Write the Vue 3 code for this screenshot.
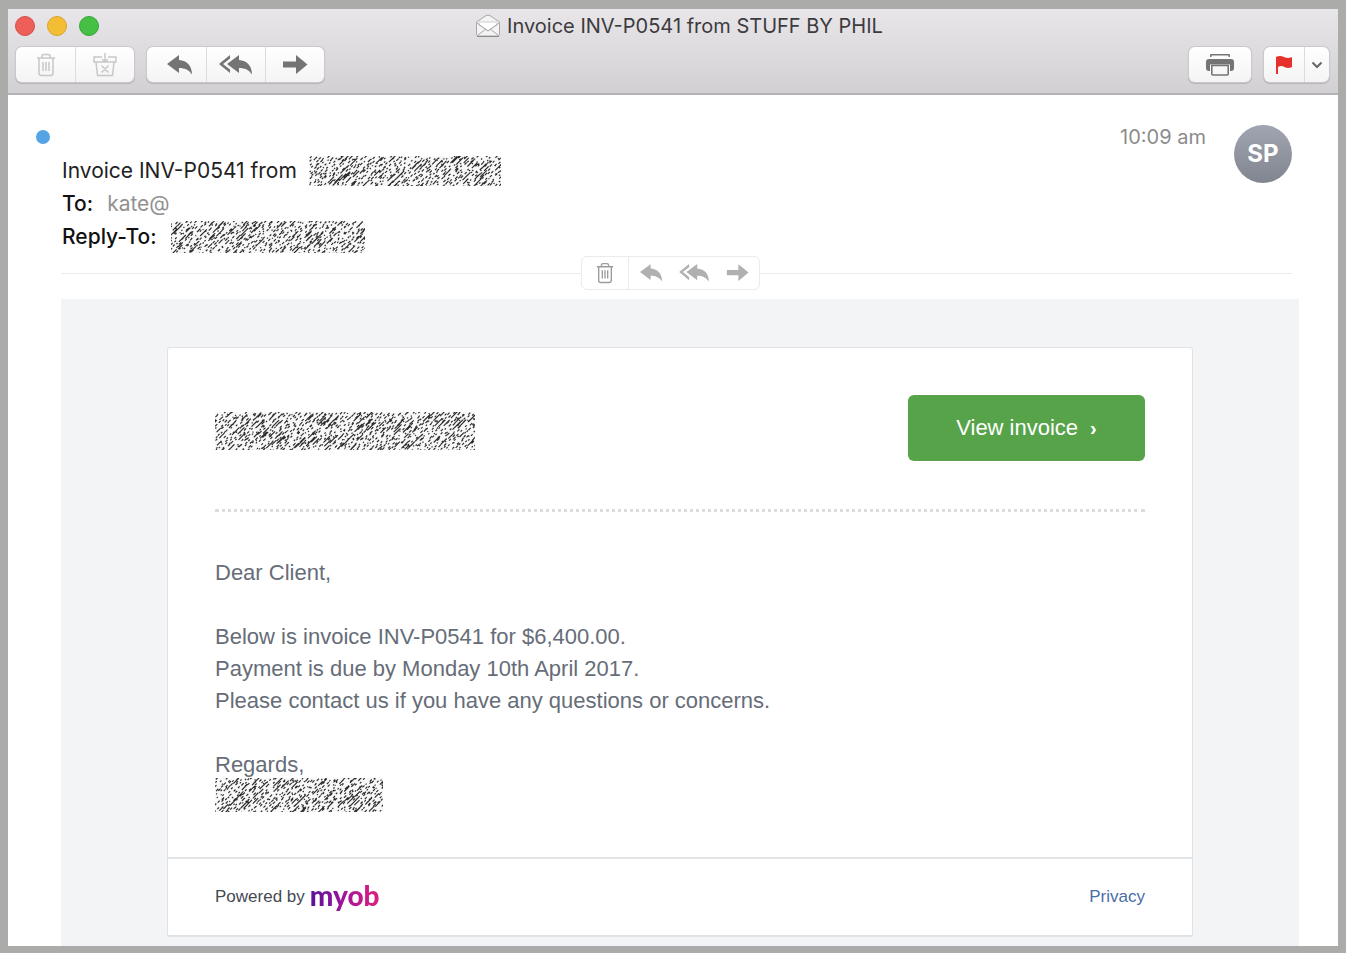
<template>
    <div class="window">
        <header class="toolbar">
            <div class="title-row">
                <div class="lights">
                    <button class="light red" aria-label="Close"></button>
                    <button class="light yellow" aria-label="Minimise"></button>
                    <button class="light green" aria-label="Zoom"></button>
                </div>
                <h1 class="window-title">
                    <svg width="26" height="24" viewBox="0 0 26 24" fill="none" stroke="#a9a9a9">
                        <path d="M1.5 8 L11 1.6 Q13 .6 15 1.6 L24.5 8 V20 Q24.5 22 22.500 22 H3.500 Q1.500 22 1.500 20Z" fill="#f4f4f4"/>
                        <path d="M4 8 H22 V11 L13 17 L4 11Z" fill="#fff" stroke="#d0d0d0"/>
                        <path d="M2 9 L13 17 L24 9 M3 21 L11 15 M23 21 L15 15"/>
                        <path d="M2 22.500 H24" stroke="#8c8c8c"/>
                    </svg>
                    <span>Invoice INV-P0541 from STUFF BY PHIL</span>
                </h1>
            </div>
            <div class="button-row">
                <div class="group">
                    <button class="tool" disabled aria-label="Delete">
                        <svg width="20" height="24" viewBox="0 0 20 24" class="line"><path :d="icons.trash"/></svg>
                    </button>
                    <button class="tool" disabled aria-label="Junk">
                        <svg width="24" height="24" viewBox="0 0 24 24" class="line"><path :d="icons.junk"/></svg>
                    </button>
                </div>
                <div class="group">
                    <button class="tool reply" aria-label="Reply">
                        <svg width="26" height="20" viewBox="0 0 26 20"><path :d="icons.reply"/></svg>
                    </button>
                    <button class="tool" aria-label="Reply all">
                        <svg width="34" height="20" viewBox="0 0 34 20">
                            <path :d="icons.reply" transform="translate(8 0)"/>
                            <path :d="icons.chevron"/>
                        </svg>
                    </button>
                    <button class="tool" aria-label="Forward">
                        <svg width="26" height="20" viewBox="0 0 26 20"><path :d="icons.forward"/></svg>
                    </button>
                </div>
                <div class="group push">
                    <button class="tool print" aria-label="Print">
                        <svg width="30" height="24" viewBox="0 0 30 24">
                            <path d="M5 4 V2 Q5 1 6 1 H24 Q25 1 25 2 V4 H23.500 V2.500 H6.500 V4Z"/>
                            <path d="M4 6 H26 Q29 6 29 9 V15 Q29 18 26 18 H25 V11.500 H5 V18 H4 Q1 18 1 15 V9 Q1 6 4 6Z"/>
                            <path d="M6.800 12.500 H23.200 V21 Q23.200 22 22.200 22 H7.800 Q6.800 22 6.800 21Z" fill="none" stroke="#747474" stroke-width="1.600"/>
                        </svg>
                    </button>
                </div>
                <div class="group">
                    <button class="tool flag" aria-label="Flag">
                        <svg width="18" height="20" viewBox="0 0 18 20">
                            <path d="M1 2 Q5 0 9 2 T17 2 V12 Q13 14 9.500 12 T3 12 V19 H1Z" fill="#e8302a"/>
                        </svg>
                    </button>
                    <button class="tool more" aria-label="Flag colours">
                        <svg width="12" height="8" viewBox="0 0 12 8"><path d="M1.500 1.500 L6 6 L10.500 1.500" fill="none" stroke="#666" stroke-width="2"/></svg>
                    </button>
                </div>
            </div>
        </header>

        <section class="details">
            <span class="unread"></span>
            <div class="fields">
                <p class="field subject">Invoice INV-P0541 from
                    <svg class="redacted" width="192" height="30"><path :d="scribble(192, 30, 7)"/></svg>
                </p>
                <p class="field"><span class="label">To:</span><span class="address">kate@</span></p>
                <p class="field"><span class="label">Reply-To:</span>
                    <svg class="redacted" width="194" height="32"><path :d="scribble(194, 32, 19)"/></svg>
                </p>
            </div>
            <time class="time">10:09 am</time>
            <div class="avatar">SP</div>
        </section>

        <div class="divider">
            <div class="pill">
                <button class="mini bin" aria-label="Delete">
                    <svg width="18" height="22" viewBox="0 0 20 24" class="line"><path :d="icons.trash"/></svg>
                </button>
                <button class="mini" aria-label="Reply">
                    <svg width="23" height="18" viewBox="0 0 26 20"><path :d="icons.reply"/></svg>
                </button>
                <button class="mini" aria-label="Reply all">
                    <svg width="31" height="18" viewBox="0 0 34 20">
                        <path :d="icons.reply" transform="translate(8 0)"/>
                        <path :d="icons.chevron"/>
                    </svg>
                </button>
                <button class="mini" aria-label="Forward">
                    <svg width="23" height="18" viewBox="0 0 26 20"><path :d="icons.forward"/></svg>
                </button>
            </div>
        </div>

        <main class="mail">
            <article class="card">
                <div class="card-top">
                    <svg class="redacted sender" width="260" height="38"><path :d="scribble(260, 38, 31)"/></svg>
                    <a href="#" class="view">View invoice <span class="arrow">›</span></a>
                </div>
                <div class="message">
                    <p>Dear Client,</p>
                    <p>
                        Below is invoice INV-P0541 for $6,400.00.<br/>
                        Payment is due by Monday 10th April 2017.<br/>
                        Please contact us if you have any questions or concerns.
                    </p>
                    <div class="sign">
                        <p>Regards,</p>
                        <svg class="redacted" width="168" height="34"><path :d="scribble(168, 34, 43)"/></svg>
                    </div>
                </div>
                <footer class="card-footer">
                    <p class="powered">Powered by <span class="myob">myob</span></p>
                    <a href="#" class="privacy">Privacy</a>
                </footer>
            </article>
        </main>
    </div>
</template>

<script setup>
const icons = {
    trash: 'M1 5 H19 M6 5 V3 Q6 1.500 8 1.500 H12 Q14 1.500 14 3 V5 M3 5 V20 Q3 22.500 5.500 22.500 H14.500 Q17 22.500 17 20 V5 M7 9 V18 M10 9 V18 M13 9 V18',
    junk: 'M9 4 H1 V9 H23 V4 H15 M3 9 L4.500 22.500 H19.500 L21 9 M12 0 V9 M9 6 L12 9 L15 6 M8.500 12.500 L15.500 19.500 M15.500 12.500 L8.500 19.500',
    reply: 'M0 9 L12 0 V5 C20 5.500 25 11 25 19.500 C22 15 18 13 12 13 V18Z',
    chevron: 'M11 0 V3.500 L4 9 L11 14.500 V18 L0 9Z',
    forward: 'M1 6.500 H14 V0 L25.500 9.500 L14 19 V12.500 H1Z',
}

// diagonal pen strokes that cover up a name or an address
const scribble = (width, height, seed) => {
    let n = seed * 7919
    const rand = () => {
        n = (n * 16807) % 2147483647
        return n / 2147483647
    }
    let d = ''
    for (let y = 1; y < height + 2; y += 3) {
        for (let x = -1; x < width; x += 4) {
            const len = rand() < 0.12 ? 4 + rand() * 4 : 0.8 + rand() * 1.6
            const sx = x + rand() * 4
            const sy = y + rand() * 3
            d += `M${sx.toFixed(1)} ${sy.toFixed(1)}l${len.toFixed(1)} ${(-len).toFixed(1)}`
        }
    }
    return d
}
</script>

<style>
body {
    margin: 0;
    background-color: #ababaa;
}
</style>

<style scoped>
.window {
    margin: 9px 8px 7px 8px;
    background-color: #fff;
    font-family: Inter, "Liberation Sans", sans-serif;
    color: #222;
}
p, h1 {
    margin: 0;
    font-weight: 400;
}
button {
    padding: 0;
    border: 0;
    background: none;
}
svg {
    display: block;
    flex-shrink: 0;
}
.toolbar {
    padding-bottom: 11px;
    background: linear-gradient(#e8e6e9, #d2d0d3);
    border-bottom: 2px solid #b5b3b5;
}
.title-row {
    display: grid;
    grid-template-columns: 1fr auto 1fr;
    align-items: center;
    height: 34px;
    margin-bottom: 4px;
}
.lights {
    display: flex;
    gap: 12px;
    padding-left: 7px;
}
.light {
    width: 20px;
    height: 20px;
    border: 1px solid;
    border-radius: 50%;
}
.red {
    background-color: #ee5f5a;
    border-color: #d44c48;
}
.yellow {
    background-color: #f3be33;
    border-color: #d9a32c;
}
.green {
    background-color: #45c045;
    border-color: #33a634;
}
.window-title {
    display: flex;
    align-items: center;
    gap: 6px;
    padding-left: 12px;
    font-size: 20px;
    line-height: 26px;
    color: #3c3b3e;
}
.button-row {
    display: flex;
    gap: 13px;
    padding: 0 9px 0 8px;
}
.group {
    display: flex;
    background: linear-gradient(#fff, #f4f4f4);
    border-radius: 6px;
    box-shadow: 0 0 0 1px #cbc9cb, 0 1px 1px 1px #b4b2b4;
}
.push {
    margin-left: auto;
}
.tool {
    display: flex;
    align-items: center;
    justify-content: center;
    width: 59px;
    height: 35px;
    fill: #747474;
}
.tool + .tool {
    border-left: 1px solid #dcdcdc;
}
.tool:disabled {
    color: #c8c8c8;
}
.reply {
    box-sizing: border-box;
    padding-left: 6px;
}
.print {
    width: 62px;
}
.flag {
    width: 40px;
}
.more {
    width: 25px;
}
.line {
    fill: none;
    stroke: currentColor;
    stroke-width: 1.5;
}
.details {
    display: flex;
    align-items: flex-start;
    padding: 30px 46px 0 28px;
}
.unread {
    width: 14px;
    height: 14px;
    margin-top: 5px;
    border-radius: 50%;
    background-color: #55a5e6;
}
.fields {
    flex: 1;
    margin: 29px 0 0 12px;
}
.field {
    display: flex;
    align-items: center;
    gap: 6px;
    height: 33px;
    font-size: 21px;
    white-space: nowrap;
}
.subject {
    gap: 12px;
}
.label {
    margin-right: 8px;
    font-weight: 500;
    color: #111;
}
.address {
    color: #929292;
}
.redacted {
    fill: none;
    stroke: #2c2c2c;
    stroke-width: 1.2;
    background-color: #f8f8f8;
}
.time {
    margin-right: 28px;
    font-size: 20px;
    line-height: 24px;
    color: #8c8c8c;
}
.avatar {
    width: 58px;
    height: 58px;
    border-radius: 50%;
    background: linear-gradient(#a0a5b1, #80858f);
    color: #fff;
    font-size: 24px;
    font-weight: 700;
    line-height: 58px;
    text-align: center;
}
.divider {
    display: flex;
    align-items: center;
    margin: 3px 46px 9px 53px;
}
.divider::before,
.divider::after {
    content: "";
    height: 1px;
    background-color: #ebebeb;
}
.divider::before {
    flex: 520 1 0;
}
.divider::after {
    flex: 532 1 0;
}
.pill {
    display: flex;
    align-items: center;
    border: 1px solid #ebebeb;
    border-radius: 6px;
}
.mini {
    display: flex;
    align-items: center;
    height: 32px;
    padding-right: 10px;
    fill: #b0b0b0;
    color: #9c9c9c;
}
.mini + .mini {
    padding-left: 6px;
}
.bin {
    padding: 0 14px;
    border-right: 1px solid #ebebeb;
}
.bin + .mini {
    padding-left: 11px;
}
.mail {
    margin: 0 39px 0 53px;
    padding: 48px 106px 9px;
    background-color: #f3f4f6;
    font-family: "Liberation Sans", Arial, sans-serif;
}
.card {
    background-color: #fff;
    border: 1px solid #e0e2e5;
    border-bottom-width: 2px;
    border-radius: 3px;
}
.card-top {
    display: flex;
    align-items: center;
    justify-content: space-between;
    margin: 0 47px;
    padding: 47px 0 48px;
    border-bottom: 3px dotted #dcdcdc;
}
.sender {
    margin-top: 6px;
}
.view {
    display: flex;
    align-items: center;
    justify-content: center;
    gap: 12px;
    width: 237px;
    height: 66px;
    border-radius: 6px;
    background-color: #57a34a;
    color: #fff;
    font-size: 22px;
    text-decoration: none;
}
.arrow {
    font-size: 20px;
    font-weight: 700;
}
.message {
    display: flex;
    flex-direction: column;
    gap: 32px;
    padding: 45px 47px;
    font-size: 22px;
    line-height: 32px;
    color: #666d78;
}
.sign .redacted {
    margin-top: -3px;
}
.card-footer {
    display: flex;
    align-items: center;
    justify-content: space-between;
    height: 76px;
    padding: 0 47px;
    border-top: 2px solid #e3e4e7;
    font-size: 17px;
}
.powered {
    display: flex;
    align-items: center;
    gap: 5px;
    color: #444a52;
}
.myob {
    margin-bottom: 4px;
    font-family: Lato, sans-serif;
    font-size: 28px;
    font-weight: 900;
    line-height: 36px;
    color: transparent;
    background: linear-gradient(90deg, #5a1399, #a3149b 50%, #e0207c);
    background-clip: text;
}
.privacy {
    color: #4a6da8;
    text-decoration: none;
}
</style>
